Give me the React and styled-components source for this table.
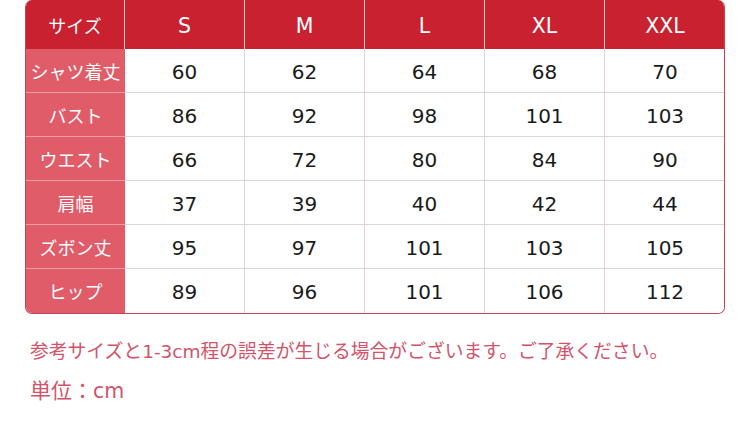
import React from "react";
import styled, { createGlobalStyle } from "styled-components";

const Global = createGlobalStyle`
  html, body { margin: 0; padding: 0; background: #fff; }
  body { font-family: "DejaVu Sans", "Noto Sans CJK JP", sans-serif; }
`;

const Page = styled.div`
  width: 750px;
  height: 431px;
  box-sizing: border-box;
  padding-left: 25px;
  display: flex;
  flex-direction: column;
`;

const Table = styled.div`
  width: 700px;
  box-sizing: border-box;
  display: grid;
  grid-template-columns: 99px repeat(5, 120px);
  grid-template-rows: 49px repeat(6, 44px);
  border: 1px solid #c64352;
  border-top: none;
  border-radius: 7px;
  overflow: hidden;
`;

const Cell = styled.div`
  box-sizing: border-box;
  display: flex;
  align-items: center;
  justify-content: center;
  font-size: 20px;
  padding-top: 2px;
`;

const HeadCell = styled(Cell)`
  background: #c9212f;
  color: #fff;
  font-size: 20.5px;
  border-right: ${(p) => (p.$last ? "none" : "1px solid #f2c4c8")};
`;

const HeadLabel = styled(HeadCell)`
  font-family: "Noto Sans CJK JP", sans-serif;
  font-size: 18px;
  padding-top: 0;
`;

const LabelCell = styled(Cell)`
  background: #e05c69;
  color: #fff;
  font-family: "Noto Sans CJK JP", sans-serif;
  font-size: 18px;
  padding-top: 0;
  border-bottom: ${(p) => (p.$last ? "none" : "1px solid #ec9ea6")};
`;

const ValueCell = styled(Cell)`
  background: #fff;
  color: #1a1a1a;
  border-right: ${(p) => (p.$lastCol ? "none" : "1px solid #e2d2d5")};
  border-bottom: ${(p) => (p.$lastRow ? "none" : "1px solid #e2d2d5")};
`;

const Notes = styled.div`
  margin-top: 23px;
  padding-left: 5px;
  display: flex;
  flex-direction: column;
  gap: 11px;
  color: #d3536a;
  font-family: "Noto Sans CJK JP", sans-serif;
  line-height: 26px;
`;

const NoteLine = styled.div`
  font-size: ${(p) => p.$size}px;
`;

const Latin = styled.span`
  font-family: "DejaVu Sans", sans-serif;
  font-size: ${(p) => p.$size}px;
`;

const sizes = ["S", "M", "L", "XL", "XXL"];
const rows = [
  ["シャツ着丈", [60, 62, 64, 68, 70]],
  ["バスト", [86, 92, 98, 101, 103]],
  ["ウエスト", [66, 72, 80, 84, 90]],
  ["肩幅", [37, 39, 40, 42, 44]],
  ["ズボン丈", [95, 97, 101, 103, 105]],
  ["ヒップ", [89, 96, 101, 106, 112]],
];

export default function App() {
  return (
    <Page>
      <Global />
      <Table>
        <HeadLabel>サイズ</HeadLabel>
        {sizes.map((s, i) => (
          <HeadCell key={s} $last={i === sizes.length - 1}>
            {s}
          </HeadCell>
        ))}
        {rows.map(([label, vals], r) => (
          <React.Fragment key={label}>
            <LabelCell $last={r === rows.length - 1}>{label}</LabelCell>
            {vals.map((v, c) => (
              <ValueCell
                key={c}
                $lastCol={c === vals.length - 1}
                $lastRow={r === rows.length - 1}
              >
                {v}
              </ValueCell>
            ))}
          </React.Fragment>
        ))}
      </Table>
      <Notes>
        <NoteLine $size={18.8}>
          参考サイズと<Latin $size={18.5}>1-3cm</Latin>程の誤差が生じる場合がございます。ご了承ください。
        </NoteLine>
        <NoteLine $size={21}>
          単位：<Latin $size={20.5}>cm</Latin>
        </NoteLine>
      </Notes>
    </Page>
  );
}
